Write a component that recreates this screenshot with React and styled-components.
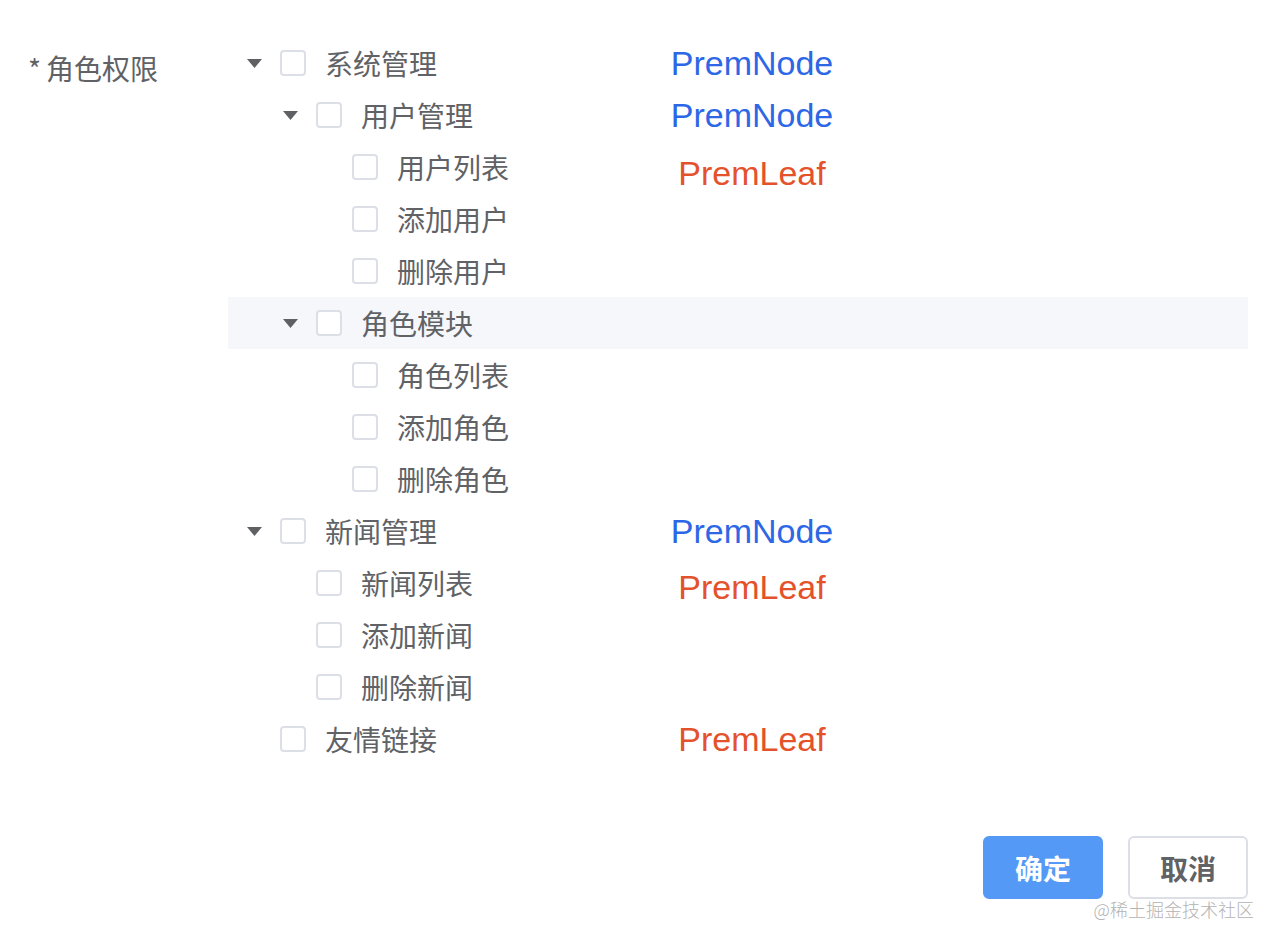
import React from 'react';
import styled, { createGlobalStyle } from 'styled-components';

const GlobalStyle = createGlobalStyle`
    body {
        margin: 0;
        background: #ffffff;
        font-family: "Noto Sans CJK SC", "Noto Sans", sans-serif;
    }
`;

const Page = styled.div`
    position: relative;
    width: 1262px;
    height: 926px;
    padding-top: 37px;
    box-sizing: border-box;
`;

const Form = styled.div`
    display: flex;
`;

const FieldLabel = styled.div`
    width: 228px;
    padding: 5px 0 0 28px;
    box-sizing: border-box;
    font-size: 28px;
    line-height: 52px;
    color: #606266;
`;

const Star = styled.span`
    margin-right: 5px;
`;

const Tree = styled.div`
    flex: 1;
    margin-right: 14px;
`;

const Row = styled.div`
    display: grid;
    grid-template-columns: 424px 200px;
    grid-template-rows: 52px;
    height: 52px;
    background: ${p => (p.$active ? '#f5f7fa' : 'transparent')};
`;

const Node = styled.div`
    display: flex;
    align-items: center;
    padding-left: ${p => (p.$level - 1) * 36}px;
`;

const Arrow = styled.span`
    width: 52px;
    display: flex;
    justify-content: center;
    align-items: center;
    visibility: ${p => (p.$show ? 'visible' : 'hidden')};
`;

const Box = styled.span`
    width: 26px;
    height: 26px;
    box-sizing: border-box;
    border: 2px solid #dcdfe6;
    border-radius: 4px;
    background: #ffffff;
    margin-right: 19px;
`;

const Text = styled.span`
    font-size: 28px;
    color: #606266;
    line-height: 52px;
`;

const Tag = styled.div`
    text-align: center;
    font-family: "Liberation Sans", Arial, sans-serif;
    font-size: 34px;
    line-height: 52px;
    transform: translateY(${p => p.$drop || 0}px);
    color: ${p => (p.$kind === 'node' ? '#2d67e6' : '#e4522c')};
`;

const Footer = styled.div`
    display: flex;
    justify-content: flex-end;
    gap: 25px;
    margin-top: 71px;
    padding-right: 14px;
`;

const Button = styled.button`
    width: 120px;
    height: 63px;
    border-radius: 6px;
    font-family: "Noto Sans CJK SC", sans-serif;
    font-size: 28px;
    font-weight: 700;
    box-sizing: border-box;
    border: 2px solid ${p => (p.$primary ? '#5599f6' : '#dcdfe6')};
    background: ${p => (p.$primary ? '#5599f6' : '#ffffff')};
    color: ${p => (p.$primary ? '#ffffff' : '#606266')};
`;

const Watermark = styled.div`
    position: absolute;
    right: 8px;
    bottom: 4px;
    font-size: 18px;
    color: #b3b3b3;
    font-weight: 300;
`;

const rows = [
    { level: 1, label: '系统管理', expand: true, tag: 'node' },
    { level: 2, label: '用户管理', expand: true, tag: 'node' },
    { level: 3, label: '用户列表', tag: 'leaf', drop: 6 },
    { level: 3, label: '添加用户' },
    { level: 3, label: '删除用户' },
    { level: 2, label: '角色模块', expand: true, active: true },
    { level: 3, label: '角色列表' },
    { level: 3, label: '添加角色' },
    { level: 3, label: '删除角色' },
    { level: 1, label: '新闻管理', expand: true, tag: 'node' },
    { level: 2, label: '新闻列表', tag: 'leaf', drop: 4 },
    { level: 2, label: '添加新闻' },
    { level: 2, label: '删除新闻' },
    { level: 1, label: '友情链接', tag: 'leaf' },
];

const Caret = () => (
    <svg width="15" height="9" viewBox="0 0 15 9">
        <path d="M0 0 L15 0 L7.5 9 Z" fill="#5f6064" />
    </svg>
);

const App = () => {
    return (
        <Page>
            <GlobalStyle />
            <Form>
                <FieldLabel>
                    <Star>*</Star>角色权限
                </FieldLabel>
                <Tree>
                    {rows.map(r => (
                        <Row key={r.label} $active={r.active}>
                            <Node $level={r.level}>
                                <Arrow $show={r.expand}>
                                    <Caret />
                                </Arrow>
                                <Box />
                                <Text>{r.label}</Text>
                            </Node>
                            {r.tag && (
                                <Tag $kind={r.tag} $drop={r.drop}>
                                    {r.tag === 'node' ? 'PremNode' : 'PremLeaf'}
                                </Tag>
                            )}
                        </Row>
                    ))}
                </Tree>
            </Form>
            <Footer>
                <Button $primary>确定</Button>
                <Button>取消</Button>
            </Footer>
            <Watermark>@稀土掘金技术社区</Watermark>
        </Page>
    );
};

export default App;
